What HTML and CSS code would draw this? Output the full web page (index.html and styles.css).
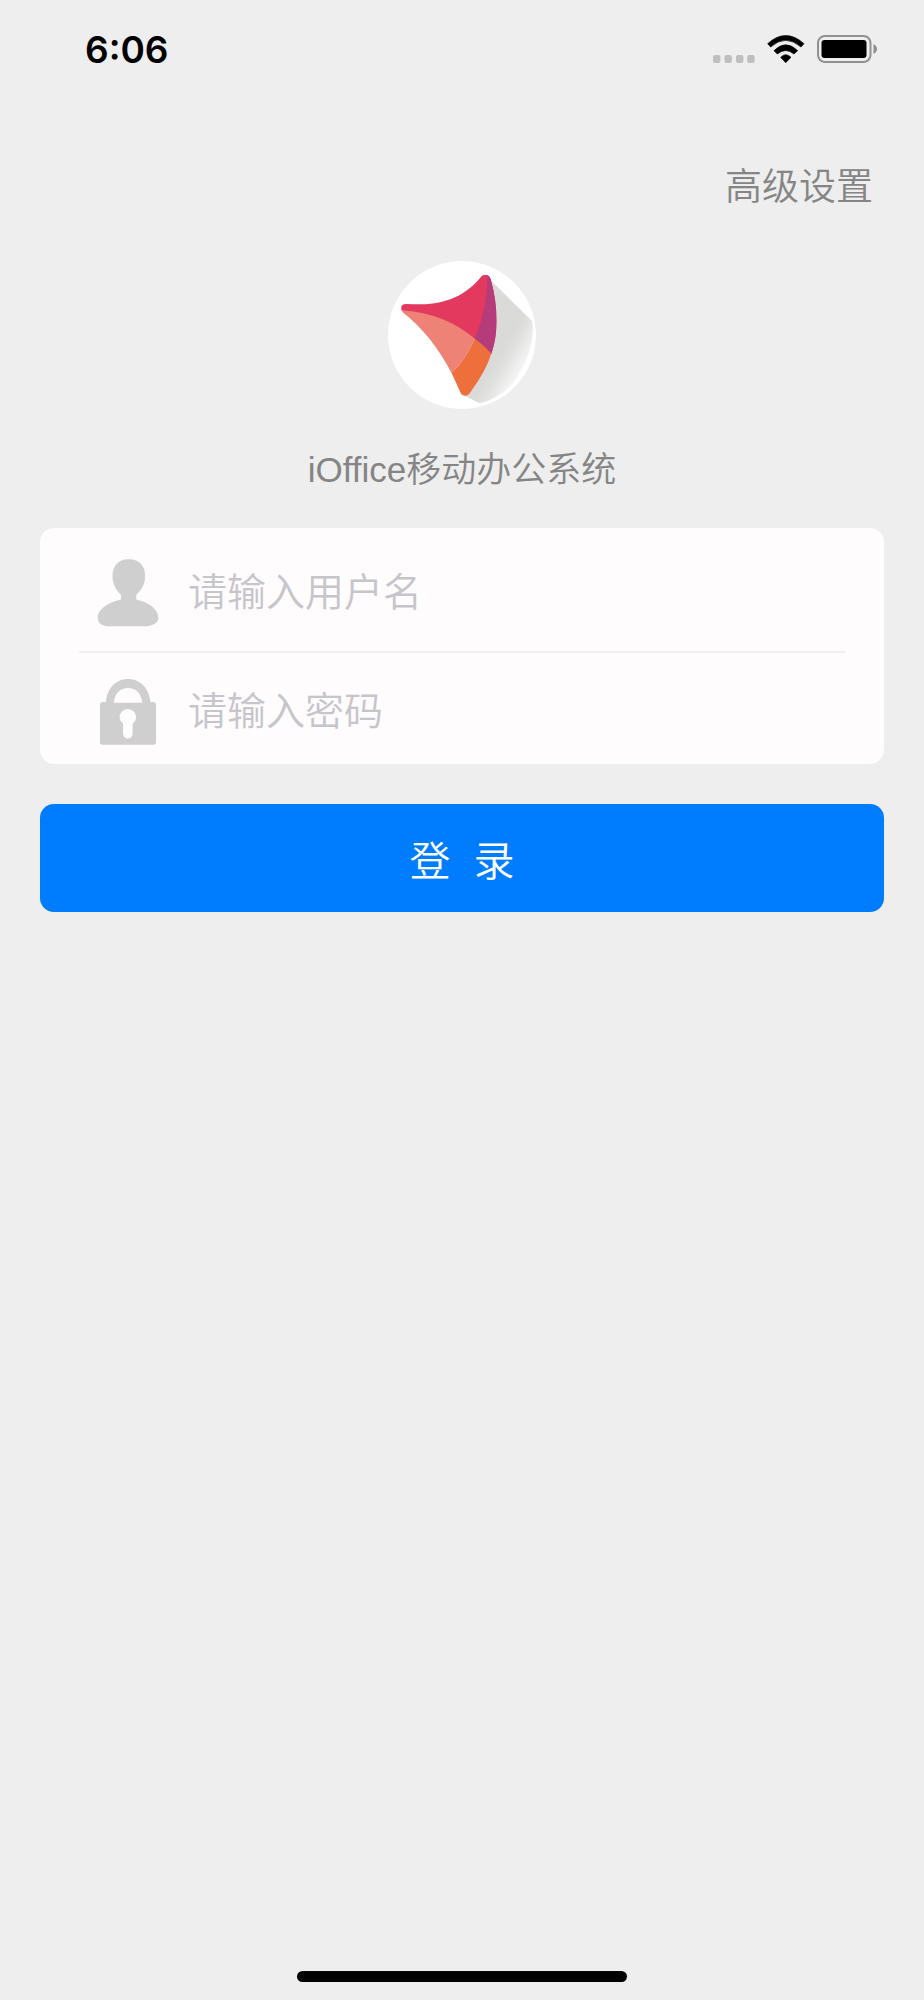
FILE: index.html
```html
<!DOCTYPE html>
<html lang="zh-CN">
<head>
<meta charset="utf-8">
<meta name="viewport" content="width=device-width, initial-scale=1">
<title>iOffice移动办公系统</title>
<link rel="stylesheet" href="styles.css">
</head>
<body>
<div class="screen">
  <header class="status-bar">
    <time class="clock">6:06</time>
    <div class="indicators">
      <svg class="signal" viewBox="0 0 42 28" width="42" height="28" aria-hidden="true">
        <rect x="0" y="20" width="7.4" height="8" rx="2"/>
        <rect x="11.5" y="20" width="7.4" height="8" rx="2"/>
        <rect x="23" y="20" width="7.4" height="8" rx="2"/>
        <rect x="34.2" y="20" width="7.4" height="8" rx="2"/>
      </svg>
      <svg viewBox="202 44 112 84" width="38" height="28" aria-hidden="true">
        <path d="M203 70Q257 21 312 70L303 80Q257 40 212 80Z" stroke="#000" stroke-width="2" stroke-linejoin="round"/>
        <path d="M222 91Q257 56 293 91L282 101Q257 80 232 101Z" stroke="#000" stroke-width="2" stroke-linejoin="round"/>
        <path d="M242 111Q257 95 273 111L257 127Z" stroke="#000" stroke-width="2" stroke-linejoin="round"/>
      </svg>
      <svg viewBox="0 0 60 28" width="60" height="28" aria-hidden="true">
        <rect x="1" y="1" width="52.5" height="26" rx="7" fill="none" stroke="#919191" stroke-width="2"/>
        <rect x="4.5" y="5" width="45" height="18" rx="3"/>
        <path d="M56.5 9Q60 11 60 14Q60 17 56.5 19Z" fill="#8e8e8e"/>
      </svg>
    </div>
  </header>

  <nav class="toolbar"><a class="settings-link" href="#settings">高级设置</a></nav>

  <main class="login">
    <svg class="logo" viewBox="24 26 444 444" role="img" aria-label="iOffice">
      <defs>
        <linearGradient id="shade" gradientUnits="userSpaceOnUse" x1="360" y1="300" x2="440" y2="347">
          <stop offset="0" stop-color="#dadad9"/>
          <stop offset=".3" stop-color="#e0e0df"/>
          <stop offset="1" stop-color="#fafafa"/>
        </linearGradient>
        <clipPath id="sail">
          <path d="M64 170C62 160 69 154 80 155C165 160 240 148 301 76C307 65 325 62 332 80C354 160 358 245 330 315C315 357 292 391 268 424C260 433 247 432 242 422L215 363C176 288 127 226 68 180Q64 176 64 170Z"/>
        </clipPath>
      </defs>
      <circle cx="246" cy="248" r="222" fill="#fff"/>
      <path d="M328 80L456 206Q466 270 430 343Q390 430 299 453L250 428Z" fill="url(#shade)"/>
      <g clip-path="url(#sail)">
        <path d="M50 50H370V310L335 305Q225 190 50 173Z" fill="#e3395f"/>
        <path d="M322 50Q326 165 284 259L335 307L370 310V50Z" fill="#b53b7a"/>
        <path d="M50 173Q190 178 284 259Q258 320 214 363L180 400Z" fill="#ef8276"/>
        <path d="M284 259Q258 320 214 363L220 440H370V340Q320 285 284 259Z" fill="#ed703c"/>
      </g>
    </svg>
    <h1 class="title">iOffice移动办公系统</h1>

    <form class="form">
      <div class="card">
        <div class="field">
          <label class="field-icon" for="username" aria-label="用户名">
            <svg viewBox="201 114 188 206" width="62" height="68" aria-hidden="true">
              <path d="M297 115C331 115 347 137 347 165C347 190 336 208 320 223V237C358 245 387 268 387 292C387 309 367 318 344 318H240C217 318 203 309 203 292C203 267 235 245 274 237V223C258 208 248 190 248 165C248 137 264 115 297 115Z"/>
            </svg>
          </label>
          <input class="input" id="username" type="text" placeholder="请输入用户名" autocomplete="username">
        </div>
        <div class="field">
          <label class="field-icon" for="password" aria-label="密码">
            <svg viewBox="201 474 188 204" width="62" height="68" aria-hidden="true">
              <path fill-rule="evenodd" d="M228 546C232 505 257 476 295 476C333 476 359 505 363 546H372Q380 546 380 554V667Q380 675 372 675H218Q210 675 210 667V554Q210 546 218 546ZM252 548H338C336 520 320 503 295 503C271 503 254 520 252 548ZM280 612V642A14.500 14.500 0 0 0 309 642V612A25 25 0 1 0 280 612Z"/>
            </svg>
          </label>
          <input class="input" id="password" type="password" placeholder="请输入密码" autocomplete="current-password">
        </div>
      </div>
      <button class="submit" type="button">登&nbsp;&nbsp;录</button>
    </form>
  </main>

  <footer class="home-area"><div class="home-bar"></div></footer>
</div>
</body>
</html>
```
FILE: styles.css
```css
* {
  box-sizing: border-box;
}

body {
  margin: 0;
  background: #eeeeee;
  font-family: "Liberation Sans", "Noto Sans CJK SC", sans-serif;
  font-weight: 350;
  font-variant-ligatures: none;
}

.screen {
  display: flex;
  flex-direction: column;
  min-height: 100vh;
}

.status-bar {
  display: flex;
  align-items: center;
  justify-content: space-between;
  height: 98px;
  padding: 0 47px 0 85px;
}

.clock {
  padding-top: 2px;
  font: 600 37px/40px Inter, sans-serif;
  color: #000;
}

.indicators {
  display: flex;
  align-items: center;
  gap: 12px;
}

.signal {
  fill: #bfbfbf;
}

.toolbar {
  display: flex;
  justify-content: flex-end;
  padding: 63px 51px 0;
}

.settings-link {
  font-size: 37px;
  line-height: 54px;
  color: #858585;
  text-decoration: none;
}

.login {
  display: flex;
  flex-direction: column;
  align-items: center;
  flex: 1;
  padding: 46px 40px 0;
}

.logo {
  width: 148px;
  height: 148px;
}

.title {
  margin: 36px 0 33px;
  font-size: 35px;
  font-weight: inherit;
  line-height: 50px;
  color: #858585;
}

.form {
  width: 100%;
}

.card {
  height: 236px;
  padding: 0 39px;
  border-radius: 14px;
  background: #fefcfd;
}

.field {
  display: flex;
  align-items: center;
  gap: 29px;
  height: 123px;
  padding: 6px 0 0 18px;
}

.field + .field {
  height: 113px;
  border-top: 2px solid #f1f0f1;
}

.field-icon {
  display: flex;
  fill: #cfcfcf;
}

.input {
  flex: 1;
  min-width: 0;
  height: 60px;
  padding: 0;
  border: 0;
  outline: 0;
  background: transparent;
  font-family: inherit;
  font-size: 39px;
  font-weight: inherit;
  color: #333;
}

.input::placeholder {
  color: #c6c5ca;
  opacity: 1;
}

.submit {
  display: block;
  width: 100%;
  height: 108px;
  margin-top: 40px;
  padding: 0;
  border: 0;
  border-radius: 14px;
  background: #007dff;
  font-family: inherit;
  font-size: 41px;
  font-weight: inherit;
  color: #fff;
}

.home-area {
  display: flex;
  justify-content: center;
  padding-bottom: 18px;
}

.home-bar {
  width: 330px;
  height: 11px;
  border-radius: 6px;
  background: #000;
}
```
